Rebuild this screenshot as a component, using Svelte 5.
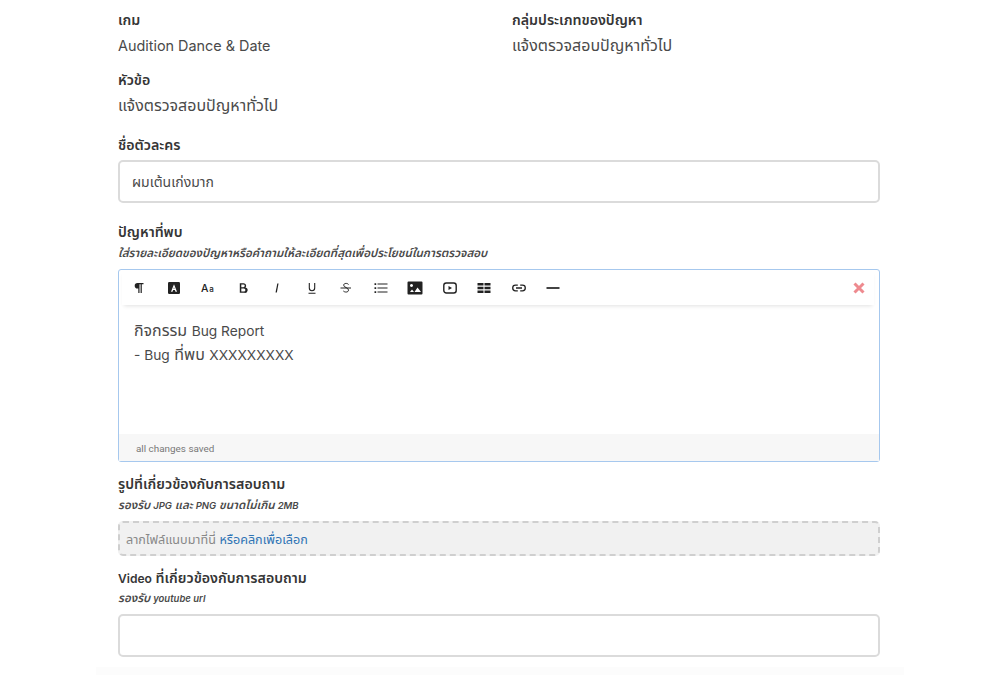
<script>
  const tools = ['para', 'font', 'size', 'bold', 'italic', 'under', 'strike', 'list', 'image', 'video', 'table', 'link', 'rule'];
</script>

<div class="page">
  <div class="two">
    <div class="field">
      <div class="label">เกม</div>
      <div class="value"><span class="en">Audition Dance &amp; Date</span></div>
    </div>
    <div class="field">
      <div class="label">กลุ่มประเภทของปัญหา</div>
      <div class="value">แจ้งตรวจสอบปัญหาทั่วไป</div>
    </div>
  </div>
  <div class="field topic">
    <div class="label">หัวข้อ</div>
    <div class="value">แจ้งตรวจสอบปัญหาทั่วไป</div>
  </div>

  <div class="label name-label">ชื่อตัวละคร</div>
  <input class="input" value="ผมเต้นเก่งมาก" />

  <div class="label problem-label">ปัญหาที่พบ</div>
  <div class="hint">ใส่รายละเอียดของปัญหาหรือคำถามให้ละเอียดที่สุดเพื่อประโยชน์ในการตรวจสอบ</div>

  <div class="editor">
    <div class="toolbar">
      {#each tools as t}
        <span class="tool">
          <svg width="16" height="16" viewBox="0 0 16 16">
            {#if t === 'para'}
              <path d="M12.500 3H6.500a2.800 2.800 0 0 0 0 5.600H7.300V13H8.500V4.200h1.100V13h1.200V4.200h1.700z" fill="#222" />
            {:else if t === 'font'}
              <rect x="2" y="2" width="12" height="12" rx="1.200" fill="#222" />
              <path d="M8 4.300 11 11.700H9.500L8.900 10H7.100L6.500 11.700H5zM7.500 8.800H8.500L8 7.200z" fill="#fff" />
            {:else if t === 'size'}
              <text x="1" y="12" class="g-size">A</text><text x="9.300" y="12" class="g-size small">a</text>
            {:else if t === 'bold'}
              <path d="M4.800 3.200H8.700a2.500 2.500 0 0 1 1.800 4.200A2.700 2.700 0 0 1 9.200 12.800H4.800zM6.300 4.500V7.200H8.400a1.350 1.350 0 0 0 0-2.700zM6.300 8.500V11.500H8.900a1.500 1.500 0 0 0 0-3z" fill="#222" />
            {:else if t === 'italic'}
              <path d="M8.900 3.500 7.200 12.500" stroke="#222" stroke-width="1.300" fill="none" />
            {:else if t === 'under'}
              <path d="M5.300 3V8a2.700 2.700 0 0 0 5.400 0V3M4.500 13.300h7" stroke="#222" stroke-width="1.100" fill="none" />
            {:else if t === 'strike'}
              <path d="M10.500 4.500C9.700 3 5.700 2.900 5.700 5.200c0 2.400 4.800 2.300 4.800 4.900 0 2.500-4 2.400-5.200.8M2.500 8h10.500" stroke="#222" stroke-width="1" fill="none" />
            {:else if t === 'list'}
              <path d="M1.500 3.200h1.700v1.700H1.500zM1.500 7.200h1.700v1.700H1.500zM1.500 11.200h1.700v1.700H1.500zM4.500 3.400h10v1.200h-10zM4.500 7.400h10v1.200h-10zM4.500 11.400h10v1.200h-10z" fill="#222" />
            {:else if t === 'image'}
              <path fill-rule="evenodd" d="M1.500 1.500h13a1 1 0 0 1 1 1v11a1 1 0 0 1-1 1h-13a1 1 0 0 1-1-1v-11a1 1 0 0 1 1-1zM4.500 4a1.500 1.500 0 1 0 .01 0zM10.500 7.500 7.500 12h6.500zM5 9.500 3 12h4z" fill="#222" />
            {:else if t === 'video'}
              <rect x="1.800" y="3" width="12.400" height="10" rx="2.500" stroke="#222" stroke-width="1.400" fill="none" />
              <path d="M6.500 5.900 10 8 6.500 10.100z" fill="#222" />
            {:else if t === 'table'}
              <path d="M1.500 3h6v2.500h-6zM8.500 3h6v2.500h-6zM1.500 6.700h6v2.600h-6zM8.500 6.700h6v2.600h-6zM1.500 10.500h6V13h-6zM8.500 10.500h6V13h-6z" fill="#222" />
            {:else if t === 'link'}
              <path d="M6.800 5.200H4.500a2.800 2.800 0 0 0 0 5.600h2.300M9.200 5.200h2.300a2.800 2.800 0 0 1 0 5.600H9.200M5 8h6" stroke="#222" stroke-width="1.300" fill="none" />
            {:else}
              <path d="M1.500 8h13" stroke="#222" stroke-width="1.700" />
            {/if}
          </svg>
        </span>
      {/each}
      <span class="spacer"></span>
      <svg class="close" width="14" height="14" viewBox="0 0 14 14">
        <path d="M2.500 2.500l9 9M11.500 2.500l-9 9" stroke="#ee8a8f" stroke-width="3" />
      </svg>
    </div>
    <div class="body">
      <div>กิจกรรม <span class="en">Bug Report</span></div>
      <div><span class="en">- Bug</span> ที่พบ <span class="en">XXXXXXXXX</span></div>
    </div>
    <div class="status">all changes saved</div>
  </div>

  <div class="label pic-label">รูปที่เกี่ยวข้องกับการสอบถาม</div>
  <div class="hint pic-hint">รองรับ <span class="en">JPG</span> และ <span class="en">PNG</span> ขนาดไม่เกิน <span class="en">2MB</span></div>
  <div class="drop">ลากไฟล์แนบมาที่นี่ <span class="browse">หรือคลิกเพื่อเลือก</span></div>

  <div class="label video-label"><span class="en">Video</span> ที่เกี่ยวข้องกับการสอบถาม</div>
  <div class="hint video-hint">รองรับ <span class="en">youtube url</span></div>
  <input class="input video-input" />
  <div class="foot"></div>
</div>

<style>
  :global(body) {
    background: #fff;
    overflow: hidden;
  }

  .page {
    width: 762px;
    height: 675px;
    margin: 0 auto;
    padding: 9px 0 0 0;
    box-sizing: border-box;
    position: relative;
    left: -1px;
    font-family: Inter, "Noto Sans", "Noto Sans Thai", sans-serif;
    color: #4a4a4a;
  }

  /* latin runs sit a bit smaller than the thai around them */
  .en {
    font-size: 0.9em;
  }

  .two {
    display: grid;
    grid-template-columns: 394px 1fr;
  }

  .label {
    font-size: 14.200px;
    line-height: 21px;
    font-weight: 600;
    color: #363636;
  }

  .label .en {
    font-size: 0.85em;
  }

  .value {
    font-size: 16px;
    line-height: 24px;
    margin-top: 3px;
  }

  .topic {
    margin-top: 11px;
  }

  .name-label {
    margin-top: 17px;
  }

  .input {
    display: block;
    width: 100%;
    height: 43px;
    box-sizing: border-box;
    margin-top: 5px;
    padding: 2px 12px 0;
    border: 2px solid #dbdbdb;
    border-radius: 5px;
    font: 14px Inter, "Noto Sans", "Noto Sans Thai", sans-serif;
    color: #4a4a4a;
    background: #fff;
    outline: none;
  }

  .problem-label {
    margin-top: 18px;
  }

  .hint {
    font-size: 11.600px;
    line-height: 16px;
    font-weight: 600;
    font-style: italic;
    color: #4a4a4a;
    margin-top: 3px;
  }

  .hint .en {
    font-size: 0.82em;
  }

  .video-hint {
    margin-top: 1px;
  }

  .editor {
    margin-top: 8px;
    height: 193px;
    box-sizing: border-box;
    border: 1px solid #a6c8ee;
    border-radius: 3px;
    display: flex;
    flex-direction: column;
  }

  .toolbar {
    height: 35px;
    display: flex;
    align-items: center;
    flex: none;
    margin: 0 5px 0 3px;
    padding-right: 8px;
    box-shadow: 0 3px 4px -2px rgba(0, 0, 0, 0.12);
  }

  .tool {
    width: 34.500px;
    display: flex;
    justify-content: center;
    flex: none;
  }

  .g-size {
    font: 500 10.500px Inter, sans-serif;
    fill: #222;
  }

  .small {
    font-size: 8px;
  }

  .spacer {
    flex: 1;
  }

  .close {
    display: block;
  }

  .body {
    flex: 1;
    padding: 14px 15px 0;
    font-size: 16px;
    line-height: 23px;
  }

  .body .en {
    font-size: 0.86em;
  }

  .status {
    background: #f7f7f7;
    height: 27px;
    line-height: 29px;
    padding-left: 17px;
    font-family: Roboto, sans-serif;
    font-size: 9.900px;
    color: #777;
  }

  .pic-label {
    margin-top: 11px;
  }

  .drop {
    margin-top: 7px;
    height: 35px;
    line-height: 33px;
    box-sizing: border-box;
    border: 2px dashed #cfcfcf;
    border-radius: 5px;
    background: #f1f1f1;
    padding-left: 6px;
    font-size: 12.600px;
    color: #888;
  }

  .browse {
    color: #2f74b5;
  }

  .video-label {
    margin-top: 11px;
  }

  .video-input {
    margin-top: 7px;
  }

  .foot {
    position: absolute;
    left: -22px;
    right: -24px;
    top: 667px;
    height: 8px;
    background: #fcfcfc;
  }
</style>
